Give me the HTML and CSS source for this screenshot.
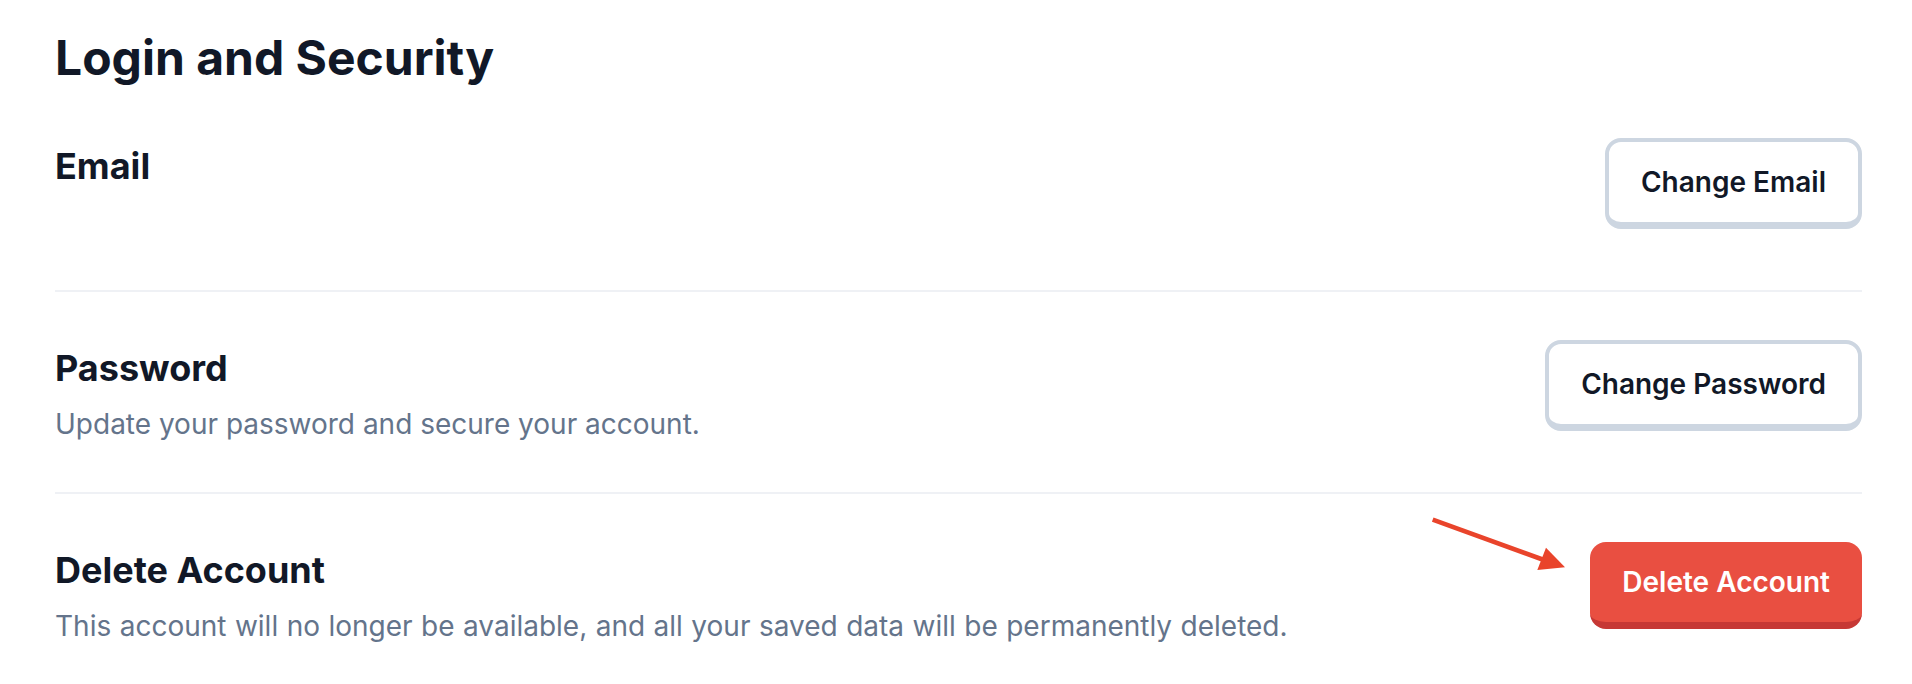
FILE: index.html
```html
<!DOCTYPE html>
<html lang="en">
<head>
<meta charset="utf-8">
<title>Login and Security</title>
<link rel="stylesheet" href="styles.css">
</head>
<body>
<main class="page">
  <h1 class="title">Login and Security</h1>

  <section class="row">
    <div class="info">
      <h2 class="label">Email</h2>
      <p class="desc"></p>
    </div>
    <div class="actions">
      <button class="btn btn-outline" type="button">Change Email</button>
    </div>
  </section>

  <section class="row">
    <div class="info">
      <h2 class="label">Password</h2>
      <p class="desc">Update your password and secure your account.</p>
    </div>
    <div class="actions">
      <button class="btn btn-outline" type="button">Change Password</button>
    </div>
  </section>

  <section class="row">
    <div class="info">
      <h2 class="label">Delete Account</h2>
      <p class="desc desc-long">This account will no longer be available, and all your saved data will be permanently deleted.</p>
    </div>
    <div class="actions">
      <svg class="pointer" width="160" height="80" viewBox="0 0 160 80" aria-hidden="true">
        <line x1="12.7" y1="14.7" x2="124" y2="55" stroke="#e9442b" stroke-width="4.6"/>
        <polygon points="145,62.3 126,42.7 117.3,65" fill="#e9442b"/>
      </svg>
      <button class="btn btn-danger" type="button">Delete Account</button>
    </div>
  </section>
</main>
</body>
</html>
```

FILE: styles.css
```css
* {
  box-sizing: border-box;
}

html,
body {
  margin: 0;
  background: #ffffff;
}

body {
  font-family: Inter, "Noto Sans", "Liberation Sans", sans-serif;
  color: #111827;
}

.page {
  padding: 26px 50px 0 55px;
}

.title {
  margin: 0 0 48px;
  font-size: 48px;
  line-height: 64px;
  font-weight: 700;
  color: #111827;
}

.row {
  display: flex;
  justify-content: space-between;
  align-items: flex-start;
  padding: 48px 0;
  border-bottom: 2px solid #eff1f5;
}

.row:first-of-type {
  padding-top: 0;
}

.row:last-of-type {
  border-bottom: none;
}

.info {
  display: flex;
  flex-direction: column;
}

.label {
  margin: 0;
  font-size: 36px;
  line-height: 56px;
  font-weight: 700;
  color: #111827;
}

.desc {
  margin: 8px 0 0;
  min-height: 40px;
  font-size: 28px;
  line-height: 40px;
  font-weight: 400;
  color: #64748b;
}

.desc-long {
  word-spacing: 0.6px;
}

.actions {
  position: relative;
  display: flex;
}

.btn {
  display: inline-flex;
  align-items: center;
  justify-content: center;
  height: 91px;
  padding: 0 32px;
  font-family: inherit;
  font-size: 28px;
  font-weight: 600;
  border-radius: 16px;
  cursor: pointer;
}

.btn-outline {
  background: #ffffff;
  color: #111827;
  border: 4px solid #cdd6e1;
  border-bottom-width: 7px;
}

.btn-danger {
  height: 87px;
  background: #e94f41;
  color: #ffffff;
  border: none;
  border-bottom: 7px solid #c63835;
}

.pointer {
  position: absolute;
  left: -170px;
  top: -37px;
}
```
